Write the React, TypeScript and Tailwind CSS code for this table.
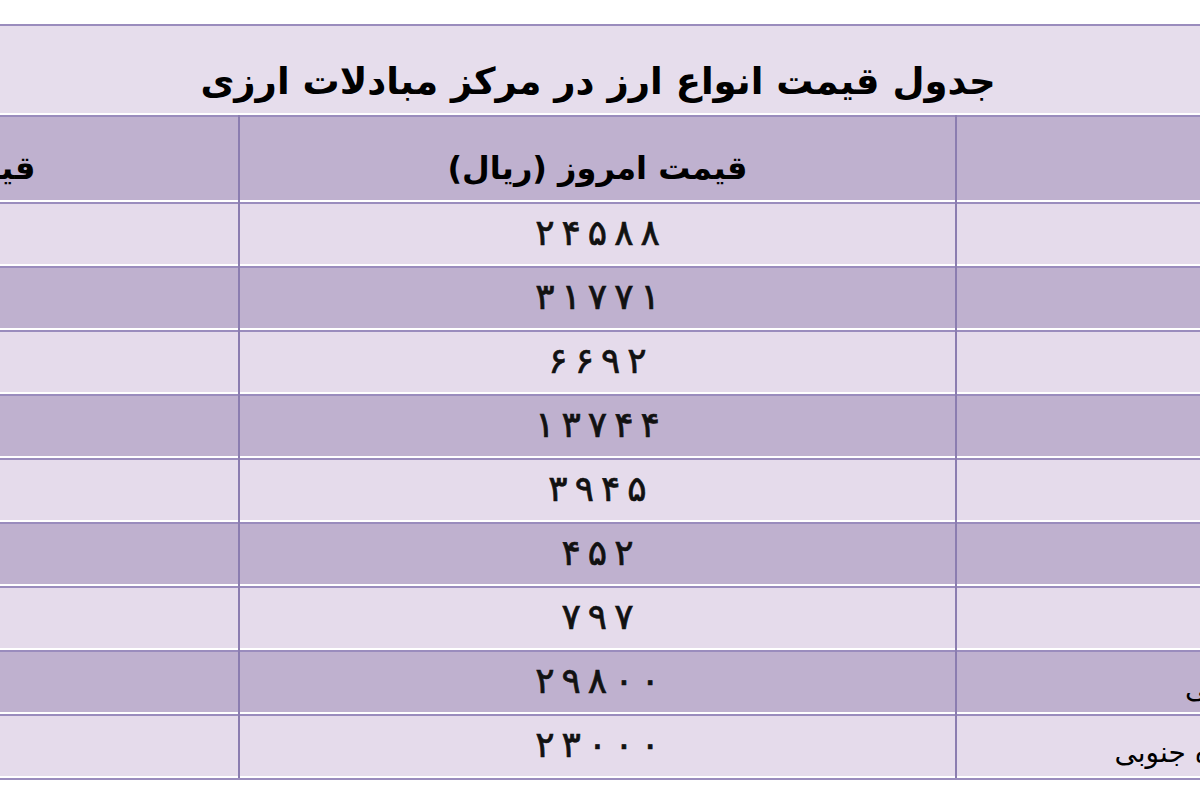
const rows = [
  { today: '۲۴۵۸۸', name: 'دلار' },
  { today: '۳۱۷۷۱', name: 'یورو' },
  { today: '۶۶۹۲', name: 'درهم' },
  { today: '۱۳۷۴۴', name: 'لیر ترکیه' },
  { today: '۳۹۴۵', name: 'یوان چین' },
  { today: '۴۵۲', name: 'روپیه هند' },
  { today: '۷۹۷', name: 'روبل روسیه' },
  { today: '۲۹۸۰۰', name: 'یکصد ین ژاپنی' },
  { today: '۲۳۰۰۰', name: 'هزار وون کره جنوبی' },
]

function Cell({ dark, children, className = '' }: { dark: boolean; children?: React.ReactNode; className?: string }) {
  return (
    <div
      className={`h-[64px] border-t-2 border-b-2 border-t-[#9a8cbd] border-b-white flex items-center ${
        dark ? 'bg-[#bfb1cf]' : 'bg-[#e5dbeb]'
      } ${className}`}
    >
      {children}
    </div>
  )
}

function HeadCell({ children, className = '' }: { children?: React.ReactNode; className?: string }) {
  return (
    <div
      className={`h-[87px] border-t-2 border-b-2 border-t-[#9a8cbd] border-b-white bg-[#bfb1cf] flex items-center justify-center ${className}`}
    >
      <span dir="rtl" className="text-[32px] font-bold text-black pt-[18px]">
        {children}
      </span>
    </div>
  )
}

// digits are spread out like the original sheet; letter-spacing is ignored for Arabic script
function Digits({ value }: { value: string }) {
  return (
    <span className="flex gap-[7px] text-[36px] text-[#111] [-webkit-text-stroke:0.7px_#111] pb-[3px]">
      {value.split('').map((d, i) => (
        <span key={i}>{d}</span>
      ))}
    </span>
  )
}

export default function App() {
  return (
    <div className="w-[1200px] h-[800px] overflow-hidden bg-white pt-[24px] font-['DejaVu_Sans',sans-serif]">
      <div className="ml-[-479px] w-[2154px]">
        {/* title */}
        <div className="h-[91px] border-t-2 border-b-2 border-t-[#9a8cbd] border-b-white bg-[#e6ddec] flex items-center justify-center">
          <h1 dir="rtl" className="text-[37px] font-bold text-black pt-[24px]">
            جدول قیمت انواع ارز در مرکز مبادلات ارزی
          </h1>
        </div>

        <div className="flex border-b-2 border-[#9a8cbd]">
          {/* yesterday price, mostly off screen */}
          <div className="w-[717px]">
            <HeadCell className="pl-[14px]">قیمت دیروز (ریال)</HeadCell>
            {rows.map((r, i) => (
              <Cell key={i} dark={i % 2 === 1} />
            ))}
          </div>

          {/* today price */}
          <div className="w-[717px] border-l-2 border-[#8b7db0]">
            <HeadCell>قیمت امروز (ریال)</HeadCell>
            {rows.map((r, i) => (
              <Cell key={i} dark={i % 2 === 1} className="justify-center">
                <Digits value={r.today} />
              </Cell>
            ))}
          </div>

          {/* currency name */}
          <div className="w-[720px] border-l-2 border-[#8b7db0]">
            <HeadCell />
            {rows.map((r, i) => (
              <Cell key={i} dark={i % 2 === 1} className="justify-end pr-[320px]">
                <span dir="rtl" className="text-[28px] text-black pt-[14px]">
                  {r.name}
                </span>
              </Cell>
            ))}
          </div>
        </div>
      </div>
    </div>
  )
}
